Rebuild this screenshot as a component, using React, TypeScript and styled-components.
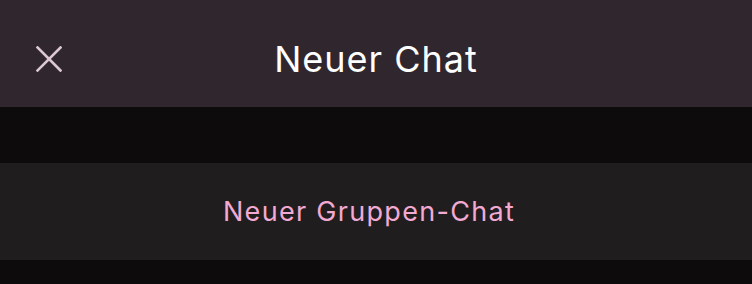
import React from "react";
import styled, { createGlobalStyle } from "styled-components";

const Global = createGlobalStyle`
  html, body { margin: 0; padding: 0; background: #0e0b0c; }
  body { font-family: Inter, "Noto Sans", sans-serif; -webkit-font-smoothing: antialiased; }
`;

const Page = styled.div`
  width: 752px;
  height: 284px;
  background: #0e0b0c;
  display: flex;
  flex-direction: column;
`;

const Header = styled.header`
  height: 107px;
  box-sizing: border-box;
  padding-top: 10px;
  background: #30272e;
  display: flex;
  align-items: center;
  position: relative;
  justify-content: center;
`;

const CloseButton = styled.button`
  position: absolute;
  left: 31px;
  top: 41px;
  width: 36px;
  height: 36px;
  padding: 0;
  border: 0;
  background: transparent;
  display: flex;
  align-items: center;
  justify-content: center;
  color: #dcc8d2;
`;

const Title = styled.h1`
  margin: 0;
  font-size: 36px;
  font-weight: 400;
  color: #ffffff;
  letter-spacing: 1px;
`;

const Gap = styled.div`
  height: 56px;
`;

const Row = styled.button`
  height: 97px;
  border: 0;
  padding: 0 14px 0 0;
  background: #201d1f;
  display: flex;
  align-items: center;
  justify-content: center;
  font-family: Inter, "Noto Sans", sans-serif;
  font-size: 27px;
  font-weight: 400;
  letter-spacing: 1.3px;
  color: #f2aad2;
`;

export default function App() {
  return (
    <>
      <Global />
      <Page>
        <Header>
          <CloseButton aria-label="Schließen">
            <svg width="26" height="26" viewBox="0 0 26 26">
              <path d="M1.5 1.5 L24.5 24.5 M24.5 1.5 L1.5 24.5" stroke="currentColor" strokeWidth="2.6" strokeLinecap="square" fill="none" />
            </svg>
          </CloseButton>
          <Title>Neuer Chat</Title>
        </Header>
        <Gap />
        <Row>Neuer Gruppen-Chat</Row>
      </Page>
    </>
  );
}
